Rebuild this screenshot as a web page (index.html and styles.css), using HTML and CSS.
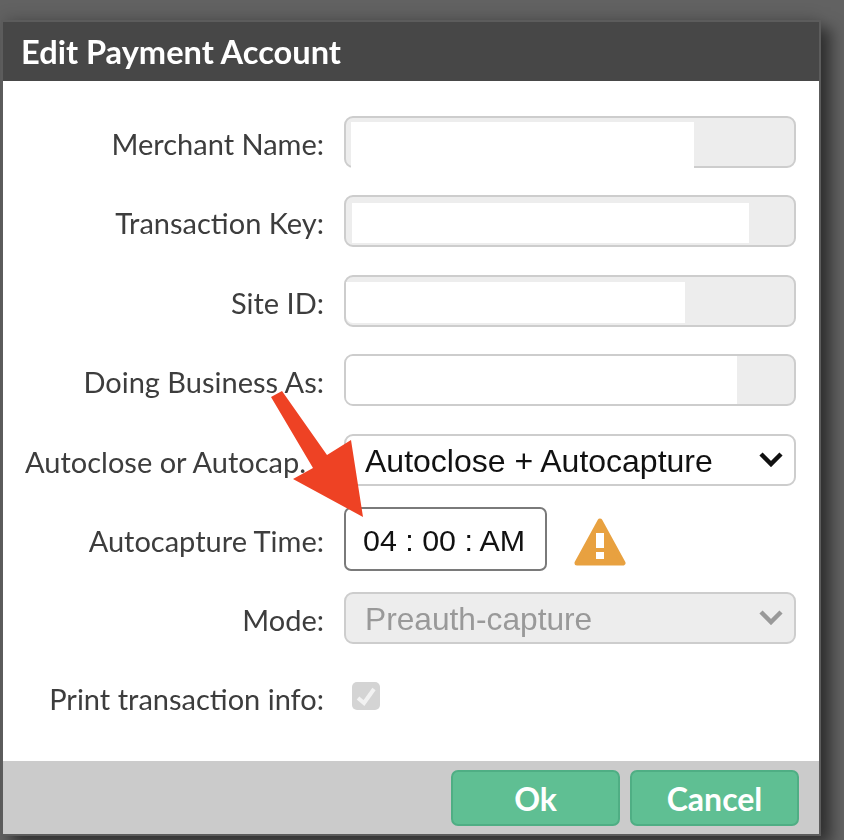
FILE: index.html

```html
<!DOCTYPE html>
<html lang="en">
<head>
  <meta charset="UTF-8" />
  <meta name="viewport" content="width=device-width, initial-scale=1.0" />
  <title>Edit Payment Account</title>
  <link rel="stylesheet" href="styles.css">
</head>
<body>
  <div class="dialog">
    <div class="dialog-title">Edit Payment Account</div>
    <div class="dialog-body">
      <div class="form-row">
        <label class="form-label">Merchant Name:</label>
        <div class="field field-masked"><span class="mask mask-name"></span></div>
      </div>
      <div class="form-row">
        <label class="form-label">Transaction Key:</label>
        <div class="field field-masked"><span class="mask mask-key"></span></div>
      </div>
      <div class="form-row">
        <label class="form-label">Site ID:</label>
        <div class="field field-masked"><span class="mask mask-site"></span></div>
      </div>
      <div class="form-row">
        <label class="form-label">Doing Business As:</label>
        <div class="field field-masked"><span class="mask mask-dba"></span></div>
      </div>
      <div class="form-row">
        <label class="form-label form-label-cut">Autoclose or Autocap.</label>
        <div class="field field-select">
          <span>Autoclose + Autocapture</span>
          <svg class="chevron" viewBox="0 0 26 16"><path d="M3 3l10 10L23 3" /></svg>
        </div>
      </div>
      <div class="form-row form-row-time">
        <label class="form-label">Autocapture Time:</label>
        <div class="field-time">04 : 00 : AM</div>
        <svg class="warning" viewBox="0 0 52 49">
          <path class="warning-bg" d="M26 3L49 45H3z" />
          <rect class="warning-mark" x="22" y="15" width="8" height="15" />
          <rect class="warning-mark" x="22" y="34" width="8" height="7" />
        </svg>
      </div>
      <div class="form-row">
        <label class="form-label">Mode:</label>
        <div class="field field-select field-disabled">
          <span>Preauth-capture</span>
          <svg class="chevron" viewBox="0 0 26 16"><path d="M3 3l10 10L23 3" /></svg>
        </div>
      </div>
      <div class="form-row form-row-check">
        <label class="form-label">Print transaction info:</label>
        <div class="check-box">
          <svg viewBox="0 0 28 28"><path d="M6 16l6 5L22 7" /></svg>
        </div>
      </div>
    </div>
    <div class="dialog-footer">
      <button class="btn">Ok</button>
      <button class="btn">Cancel</button>
    </div>
  </div>

  <!-- annotation drawn over the screenshot -->
  <svg class="arrow" viewBox="0 0 844 840">
    <path d="M271 397L282 391L327 455L351 440L363 517L293 479L313 468z" />
  </svg>
</body>
</html>
```

FILE: styles.css

```css
html, body {
  height: 100%;
}

body {
  margin: 0;
  padding: 22px 0 0 3px;
  box-sizing: border-box;
  background-color: #626262;
  font-family: "Lato", sans-serif;
  overflow: hidden;
  position: relative;
}

.dialog {
  width: 816px;
  height: 812px;
  display: flex;
  flex-direction: column;
  background-color: #fff;
  box-shadow: 0 0 0 2px #5c5c5c, 10px 8px 14px 2px rgba(0, 0, 0, 0.5), 0 -6px 14px rgba(0, 0, 0, 0.12);
  filter: blur(0.45px);
}

.dialog-title {
  height: 59px;
  line-height: 60px;
  padding-left: 18px;
  background-color: #474747;
  color: #fff;
  font-size: 32.6px;
  font-weight: bold;
  flex-shrink: 0;
}

.dialog-body {
  flex: 1;
  padding-top: 35px;
  color: #3d3d3d;
}

.form-row {
  display: flex;
  align-items: center;
  height: 52px;
  margin-bottom: 27.4px;
}

.form-label {
  width: 321px;
  margin-right: 20px;
  padding-top: 3px;
  text-align: right;
  font-size: 29px;
  white-space: nowrap;
  flex-shrink: 0;
}

.form-label-cut {
  box-sizing: border-box;
  padding-left: 22px;
  text-align: left;
}

.field {
  width: 452px;
  height: 52px;
  box-sizing: border-box;
  border: 2px solid #cdcdcd;
  border-radius: 9px;
  background-color: #ededed;
  flex-shrink: 0;
}

.field-masked {
  position: relative;
}

.mask {
  position: absolute;
  background-color: #fff;
  display: block;
}

/* white patches hide the account values */
.mask-name { left: 5px; top: 4px; width: 343px; height: 46px; }
.mask-key { left: 6px; top: 6px; width: 397px; height: 40px; }
.mask-site { left: 0; top: 5px; width: 339px; height: 41px; border-radius: 0 0 0 7px; }
.mask-dba { left: 0; top: 0; width: 391px; height: 48px; border-radius: 7px 0 0 7px; }

.field-select {
  display: flex;
  align-items: center;
  justify-content: space-between;
  padding: 3px 10px 0 19px;
  background-color: #fff;
  color: #111;
  font-family: "Liberation Sans", sans-serif;
  font-size: 32px;
}

.chevron {
  width: 26px;
  height: 16px;
  margin-top: -5px;
  fill: none;
  stroke: #111;
  stroke-width: 4.5;
}

.field-disabled {
  background-color: #ededed;
  color: #999;
}

.field-disabled span {
  font-size: 31.7px;
}

.field-disabled .chevron {
  stroke: #999;
}

.form-row-time {
  height: 64px;
  margin-top: -6px;
  margin-bottom: 21px;
}

.field-time {
  width: 203px;
  height: 64px;
  box-sizing: border-box;
  border: 2px solid #7a7a7a;
  border-radius: 7px;
  padding-left: 17px;
  line-height: 63px;
  color: #111;
  font-family: "Liberation Sans", sans-serif;
  font-size: 30.4px;
  white-space: nowrap;
  flex-shrink: 0;
}

.warning {
  width: 52px;
  height: 49px;
  margin-left: 27px;
  margin-top: 7px;
}

.warning-bg {
  fill: #e8a140;
  stroke: #e8a140;
  stroke-width: 5;
  stroke-linejoin: round;
}

.warning-mark {
  fill: #fff;
}

.form-row-check {
  height: 28px;
  margin-top: 38px;
}

.form-row-check .form-label {
  padding-top: 5px;
}

.check-box {
  width: 28px;
  height: 28px;
  margin-left: 8px;
  border-radius: 5px;
  background-color: #d4d4d4;
}

.check-box svg {
  display: block;
  fill: none;
  stroke: #f2f2f2;
  stroke-width: 4;
}

.dialog-footer {
  height: 73px;
  flex-shrink: 0;
  box-sizing: border-box;
  padding: 9px 20px 0 0;
  display: flex;
  justify-content: flex-end;
  gap: 10px;
  background-color: #cbcbcb;
}

.btn {
  width: 169px;
  height: 56px;
  box-sizing: border-box;
  border: 2px solid #4fae84;
  border-radius: 7px;
  background-color: #5fbf93;
  color: #fff;
  font-family: "Lato", sans-serif;
  font-size: 32px;
  font-weight: bold;
}

.arrow {
  position: absolute;
  left: 0;
  top: 0;
  width: 844px;
  height: 840px;
  fill: #ee4224;
}
```
